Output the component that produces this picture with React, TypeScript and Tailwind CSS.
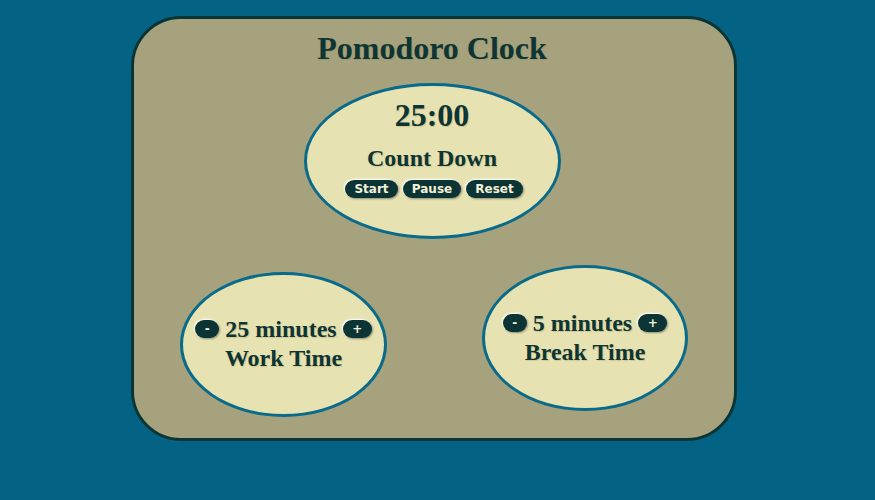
import React from "react";

const serif = {
  fontFamily: '"Liberation Serif", "Times New Roman", serif',
  textShadow: "1px 1px 1px rgba(150,120,40,0.25)",
};
const sans = { fontFamily: '"DejaVu Sans", Verdana, sans-serif' };

function Btn({ label, w }: { label: string; w: string }) {
  return (
    <button
      className={`${w} h-[18px] rounded-[9px] bg-[#0c3434] text-[#f4f1d8] text-[12px] font-bold leading-[18px] shadow-[-1px_-1px_2px_0_#ffffff,1px_1px_2px_0_#8a8a70] flex items-center justify-center`}
      style={sans}
    >
      {label}
    </button>
  );
}

function Setter({ value, title }: { value: string; title: string }) {
  return (
    <div className="flex flex-col items-center">
      <div className="flex items-center gap-[6px]">
        <Btn label="-" w="w-[24px]" />
        <span className="text-[24px] font-bold leading-[28px] text-[#0d3535]" style={serif}>
          {value}
        </span>
        <Btn label="+" w="w-[29px]" />
      </div>
      <div className="text-[24px] font-bold leading-[28px] mt-[1px] text-[#0d3535]" style={serif}>
        {title}
      </div>
    </div>
  );
}

export default function App() {
  return (
    <div className="w-[875px] h-[500px] bg-[#046384] pt-[16px]">
      <div className="ml-[131px] w-[606px] h-[425px] rounded-[50px] border-[3px] border-[#0b3535] bg-[#a6a27d] flex flex-col items-center">
        <h1 className="mt-[11px] text-[32px] font-bold leading-[36px] text-[#0d3535] ml-[-4px]" style={serif}>
          Pomodoro Clock
        </h1>
        <div className="mt-[17px] ml-[-4px] w-[257px] h-[156px] rounded-[50%] border-[3px] border-[#0a6a8a] bg-[#e6e2b2] flex flex-col items-center pt-[11px]">
          <div className="text-[32px] font-bold leading-[36px] text-[#0d3535]" style={serif}>
            25:00
          </div>
          <div className="mt-[11px] text-[24px] font-bold leading-[28px] text-[#0d3535]" style={serif}>
            Count Down
          </div>
          <div className="mt-[8px] ml-[4px] flex gap-[5px]">
            <Btn label="Start" w="w-[53px]" />
            <Btn label="Pause" w="w-[58px]" />
            <Btn label="Reset" w="w-[57px]" />
          </div>
        </div>
        <div className="w-full flex items-start">
          <div className="ml-[46px] mt-[33px] w-[207px] h-[145px] rounded-[50%] border-[3px] border-[#0a6a8a] bg-[#e6e2b2] flex items-center justify-center">
            <div className="mt-[-2px]">
              <Setter value="25 minutes" title="Work Time" />
            </div>
          </div>
          <div className="ml-[95px] mt-[26px] w-[206px] h-[146px] rounded-[50%] border-[3px] border-[#0a6a8a] bg-[#e6e2b2] flex items-center justify-center">
            <div className="mt-[-2px]">
              <Setter value="5 minutes" title="Break Time" />
            </div>
          </div>
        </div>
      </div>
    </div>
  );
}
